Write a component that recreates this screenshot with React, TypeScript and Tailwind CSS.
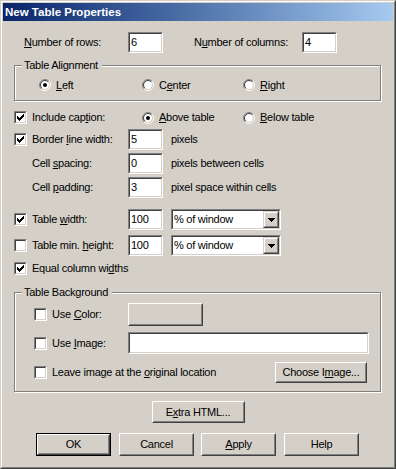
import React from "react";

function Check() {
  return (
    <svg width="7" height="7" viewBox="0 0 7 7" shapeRendering="crispEdges" className="block">
      <rect x="6" y="0" width="1" height="1" fill="#000" />
      <rect x="5" y="1" width="2" height="1" fill="#000" />
      <rect x="0" y="2" width="1" height="1" fill="#000" />
      <rect x="4" y="2" width="3" height="1" fill="#000" />
      <rect x="0" y="3" width="2" height="1" fill="#000" />
      <rect x="3" y="3" width="3" height="1" fill="#000" />
      <rect x="0" y="4" width="5" height="1" fill="#000" />
      <rect x="1" y="5" width="3" height="1" fill="#000" />
      <rect x="2" y="6" width="1" height="1" fill="#000" />
    </svg>
  );
}

function CheckBox({ checked }: { checked?: boolean }) {
  return (
    <div className="w-[13px] h-[13px] shrink-0 border border-[#808080] border-r-white border-b-white">
      <div className="w-full h-full border border-[#404040] border-r-[#d4d0c8] border-b-[#d4d0c8] bg-white flex items-center justify-center">
        {checked ? <Check /> : null}
      </div>
    </div>
  );
}

function RadioDot({ checked }: { checked?: boolean }) {
  return (
    <svg width="12" height="12" viewBox="0 0 12 12" className="block shrink-0">
      <circle cx="6" cy="6" r="4.2" fill="#fff" />
      <path d="M2.111 9.889 A5.5 5.5 0 0 1 9.889 2.111" fill="none" stroke="#808080" strokeWidth="1" />
      <path d="M9.889 2.111 A5.5 5.5 0 0 1 2.111 9.889" fill="none" stroke="#ffffff" strokeWidth="1" />
      <path d="M2.818 9.182 A4.5 4.5 0 0 1 9.182 2.818" fill="none" stroke="#404040" strokeWidth="1" />
      <path d="M9.182 2.818 A4.5 4.5 0 0 1 2.818 9.182" fill="none" stroke="#d4d0c8" strokeWidth="1" />
      {checked ? <circle cx="6" cy="6" r="2" fill="#000" /> : null}
    </svg>
  );
}

function Radio({ checked, children, className }: { checked?: boolean; children: React.ReactNode; className?: string }) {
  return (
    <div className={"flex items-center " + (className || "")}>
      <RadioDot checked={checked} />
      <span className="ml-[5px] leading-[13px]">{children}</span>
    </div>
  );
}

function Field({ value, className }: { value?: string; className: string }) {
  return (
    <div className={"shrink-0 border border-[#808080] border-r-white border-b-white " + className}>
      <div className="w-full h-full border border-[#404040] border-r-[#d4d0c8] border-b-[#d4d0c8] bg-white flex items-center pl-[1px] leading-[13px]">
        {value}
      </div>
    </div>
  );
}

function Select({ value }: { value: string }) {
  return (
    <div className="shrink-0 w-[110px] h-[21px] border border-[#808080] border-r-white border-b-white">
      <div className="w-full h-full border border-[#404040] border-r-[#d4d0c8] border-b-[#d4d0c8] bg-white flex items-center">
        <span className="flex-1 pl-[1px] leading-[13px]">{value}</span>
        <div className="w-[16px] h-[17px] border border-[#d4d0c8] border-r-[#404040] border-b-[#404040] bg-[#d4d0c8]">
          <div className="w-full h-full border border-white border-r-[#808080] border-b-[#808080] flex items-center justify-center">
            <svg width="7" height="4" viewBox="0 0 7 4" shapeRendering="crispEdges" className="block">
              <rect x="0" y="0" width="7" height="1" fill="#000" />
              <rect x="1" y="1" width="5" height="1" fill="#000" />
              <rect x="2" y="2" width="3" height="1" fill="#000" />
              <rect x="3" y="3" width="1" height="1" fill="#000" />
            </svg>
          </div>
        </div>
      </div>
    </div>
  );
}

function Button({ children, className, isDefault }: { children?: React.ReactNode; className: string; isDefault?: boolean }) {
  if (isDefault) {
    return (
      <div className={"shrink-0 border border-black " + className}>
        <div className="w-full h-full border border-white border-r-[#404040] border-b-[#404040]">
          <div className="w-full h-full border border-[#d4d0c8] border-r-[#808080] border-b-[#808080] flex items-center justify-center leading-[13px]">
            {children}
          </div>
        </div>
      </div>
    );
  }
  return (
    <div className={"shrink-0 border border-white border-r-[#404040] border-b-[#404040] " + className}>
      <div className="w-full h-full border border-[#d4d0c8] border-r-[#808080] border-b-[#808080] flex items-center justify-center leading-[13px]">
        {children}
      </div>
    </div>
  );
}

function Group({ title, className, children }: { title: string; className: string; children: React.ReactNode }) {
  return (
    <div className={"relative ml-[11px] w-[367px] border border-[#808080] shadow-[inset_1px_1px_0_#ffffff,1px_1px_0_#ffffff] " + className}>
      <span className="absolute left-[7px] top-[-7px] px-[2px] pr-[4px] bg-[#d4d0c8] leading-[13px]">{title}</span>
      {children}
    </div>
  );
}

export default function App() {
  return (
    <div className="w-[396px] h-[469px] bg-[#d4d0c8] border border-[#d4d0c8] border-r-[#404040] border-b-[#404040] font-['Liberation_Sans',Arial,sans-serif] text-[11px] tracking-[-0.25px] text-black select-none">
      <div className="w-full h-full border border-white border-r-[#808080] border-b-[#808080] p-px flex flex-col">
        <div className="h-[18px] shrink-0 bg-gradient-to-r from-[#0a246a] to-[#a6caf0] flex items-center pl-[2px] text-white font-bold text-[11.5px] tracking-normal leading-[14px]">
          New Table Properties
        </div>

        <div className="flex items-center h-[21px] mt-[11px] pl-[21px]">
          <span className="w-[104px] leading-[13px]"><u>N</u>umber of rows:</span>
          <Field value="6" className="w-[35px] h-[21px]" />
          <span className="w-[108px] ml-[31px] leading-[13px]">N<u>u</u>mber of columns:</span>
          <Field value="4" className="w-[35px] h-[21px]" />
        </div>

        <Group title="Table Alignment" className="mt-[12px] h-[36px]">
          <div className="flex items-center h-[12px] mt-[13px] pl-[24px]">
            <Radio checked className="w-[103px]"><u>L</u>eft</Radio>
            <Radio className="w-[101px]">C<u>e</u>nter</Radio>
            <Radio><u>R</u>ight</Radio>
          </div>
        </Group>

        <div className="flex items-center h-[13px] mt-[10px] ml-[11px]">
          <div className="w-[128px] flex items-center">
            <CheckBox checked />
            <span className="ml-[5px] leading-[13px]">Include cap<u>t</u>ion:</span>
          </div>
          <Radio checked className="w-[101px]"><u>A</u>bove table</Radio>
          <Radio><u>B</u>elow table</Radio>
        </div>

        <div className="flex items-center h-[21px] mt-[5px] ml-[11px]">
          <div className="w-[114px] flex items-center">
            <CheckBox checked />
            <span className="ml-[5px] leading-[13px]">Border <u>l</u>ine width:</span>
          </div>
          <Field value="5" className="w-[35px] h-[21px]" />
          <span className="ml-[8px] leading-[13px]">pixels</span>
        </div>

        <div className="flex items-center h-[21px] mt-[3px] ml-[11px]">
          <span className="w-[114px] pl-[18px] leading-[13px]">Cell <u>s</u>pacing:</span>
          <Field value="0" className="w-[35px] h-[21px]" />
          <span className="ml-[8px] leading-[13px]">pixels between cells</span>
        </div>

        <div className="flex items-center h-[21px] mt-[3px] ml-[11px]">
          <span className="w-[114px] pl-[18px] leading-[13px]">Cell <u>p</u>adding:</span>
          <Field value="3" className="w-[35px] h-[21px]" />
          <span className="ml-[8px] leading-[13px]">pixel space within cells</span>
        </div>

        <div className="flex items-center h-[21px] mt-[11px] ml-[11px]">
          <div className="w-[114px] flex items-center">
            <CheckBox checked />
            <span className="ml-[5px] leading-[13px]">Table <u>w</u>idth:</span>
          </div>
          <Field value="100" className="w-[35px] h-[21px]" />
          <div className="ml-[8px]">
            <Select value="% of window" />
          </div>
        </div>

        <div className="flex items-center h-[21px] mt-[5px] ml-[11px]">
          <div className="w-[114px] flex items-center">
            <CheckBox />
            <span className="ml-[5px] leading-[13px]">Table min. <u>h</u>eight:</span>
          </div>
          <Field value="100" className="w-[35px] h-[21px]" />
          <div className="ml-[8px]">
            <Select value="% of window" />
          </div>
        </div>

        <div className="flex items-center h-[13px] mt-[6px] ml-[11px]">
          <CheckBox checked />
          <span className="ml-[5px] leading-[13px]">Equal column wi<u>d</u>ths</span>
        </div>

        <Group title="Table Background" className="mt-[17px] h-[100px]">
          <div className="flex items-center h-[23px] mt-[10px] pl-[19px]">
            <div className="w-[94px] flex items-center">
              <CheckBox />
              <span className="ml-[5px] leading-[13px]">Use <u>C</u>olor:</span>
            </div>
            <Button className="w-[75px] h-[23px]" />
          </div>
          <div className="flex items-center h-[22px] mt-[6px] pl-[19px]">
            <div className="w-[94px] flex items-center">
              <CheckBox />
              <span className="ml-[5px] leading-[13px]">Use <u>I</u>mage:</span>
            </div>
            <Field className="w-[241px] h-[22px]" />
          </div>
          <div className="flex items-center h-[21px] mt-[8px] pl-[19px]">
            <div className="w-[241px] flex items-center">
              <CheckBox />
              <span className="ml-[5px] leading-[13px]">Leave image at the <u>o</u>riginal location</span>
            </div>
            <Button className="w-[92px] h-[21px]">Choose I<u>m</u>age...</Button>
          </div>
        </Group>

        <div className="flex justify-center mt-[9px]">
          <Button className="w-[93px] h-[22px]">E<u>x</u>tra HTML...</Button>
        </div>

        <div className="flex items-center mt-[10px] ml-[33px]">
          <Button isDefault className="w-[75px] h-[23px]">OK</Button>
          <Button className="w-[75px] h-[23px] ml-[8px]">Cancel</Button>
          <Button className="w-[75px] h-[23px] ml-[7px]"><u>A</u>pply</Button>
          <Button className="w-[75px] h-[23px] ml-[8px]">Help</Button>
        </div>
      </div>
    </div>
  );
}
